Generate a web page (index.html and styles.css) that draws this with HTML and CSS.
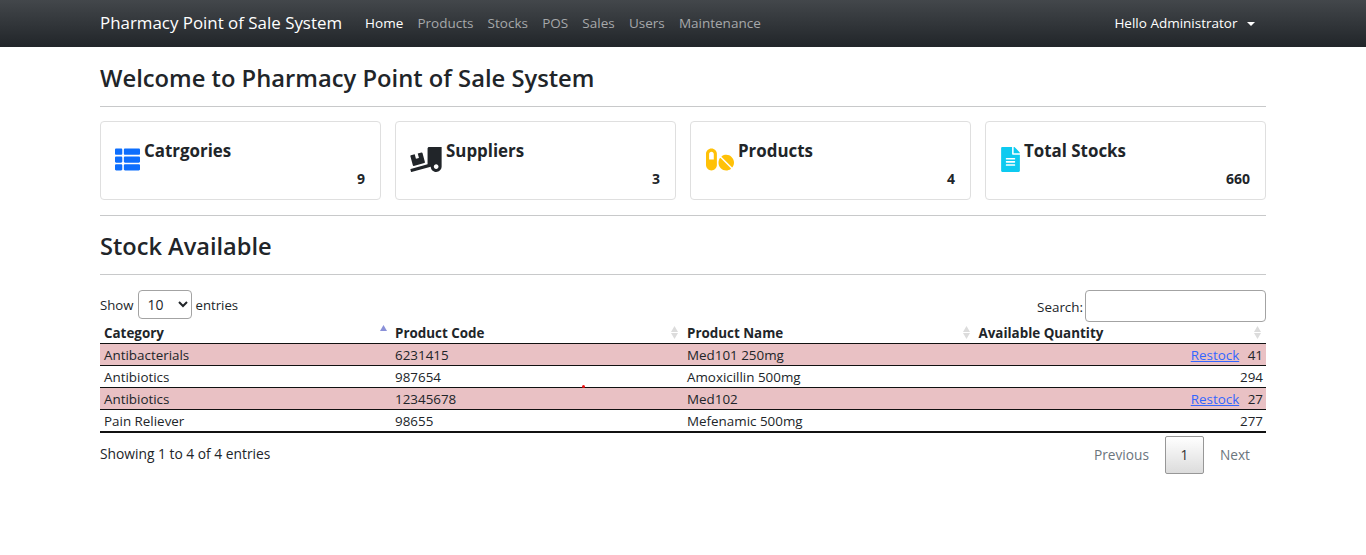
FILE: index.html
```html
<!DOCTYPE html>
<html lang="en">
<head>
    <meta charset="UTF-8">
    <title>Pharmacy Point of Sale System</title>
    <link rel="stylesheet" href="styles.css">
</head>
<body>

    <nav class="navbar">
        <div class="nav-left">
            <span class="brand">Pharmacy Point of Sale System</span>
            <a class="nav-link active" href="#">Home</a>
            <a class="nav-link" href="#">Products</a>
            <a class="nav-link" href="#">Stocks</a>
            <a class="nav-link" href="#">POS</a>
            <a class="nav-link" href="#">Sales</a>
            <a class="nav-link" href="#">Users</a>
            <a class="nav-link" href="#">Maintenance</a>
        </div>
        <a class="user-menu" href="#">Hello Administrator <span class="caret"></span></a>
    </nav>

    <main class="container">
        <h1 class="page-title">Welcome to Pharmacy Point of Sale System</h1>
        <hr>

        <div class="cards">
            <div class="card">
                <div class="card-head">
                    <svg class="icon icon-blue" viewBox="0 0 512 512"><path d="M149.333 216v80c0 13.255-10.745 24-24 24H24c-13.255 0-24-10.745-24-24v-80c0-13.255 10.745-24 24-24h101.333c13.255 0 24 10.745 24 24zM0 376v80c0 13.255 10.745 24 24 24h101.333c13.255 0 24-10.745 24-24v-80c0-13.255-10.745-24-24-24H24c-13.255 0-24 10.745-24 24zM125.333 32H24C10.745 32 0 42.745 0 56v80c0 13.255 10.745 24 24 24h101.333c13.255 0 24-10.745 24-24V56c0-13.255-10.745-24-24-24zm80 448H488c13.255 0 24-10.745 24-24v-80c0-13.255-10.745-24-24-24H205.333c-13.255 0-24 10.745-24 24v80c0 13.255 10.745 24 24 24zm-24-424v80c0 13.255 10.745 24 24 24H488c13.255 0 24-10.745 24-24V56c0-13.255-10.745-24-24-24H205.333c-13.255 0-24 10.745-24 24zm24 264H488c13.255 0 24-10.745 24-24v-80c0-13.255-10.745-24-24-24H205.333c-13.255 0-24 10.745-24 24v80c0 13.255 10.745 24 24 24z"/></svg>
                    <h3 class="card-title">Catrgories</h3>
                </div>
                <div class="card-count">9</div>
            </div>
            <div class="card">
                <div class="card-head">
                    <svg class="icon icon-dark" viewBox="0 0 640 512"><path d="M50.2 375.6c2.3 8.5 11.1 13.6 19.6 11.3l216.4-58c8.5-2.3 13.6-11.1 11.3-19.6l-49.7-185.5c-2.3-8.5-11.1-13.6-19.6-11.3L151 133.3l24.8 92.7-61.8 16.5-24.8-92.7-77.3 20.7C3.4 172.8-1.7 181.6.6 190.1l49.6 185.5zM384 0c-17.7 0-32 14.3-32 32v323.6L5.9 450c-4.3 1.2-6.8 5.6-5.6 9.8l12.6 46.3c1.2 4.3 5.6 6.8 9.8 5.6l393.7-107.4C418.8 464.1 467.6 512 528 512c61.9 0 112-50.1 112-112V0H384zm144 448c-26.5 0-48-21.5-48-48s21.5-48 48-48 48 21.5 48 48-21.5 48-48 48z"/></svg>
                    <h3 class="card-title">Suppliers</h3>
                </div>
                <div class="card-count">3</div>
            </div>
            <div class="card">
                <div class="card-head">
                    <svg class="icon icon-yellow" viewBox="0 0 576 512"><path d="M112 32C50.1 32 0 82.1 0 144v224c0 61.9 50.1 112 112 112s112-50.1 112-112V144c0-61.9-50.1-112-112-112zm48 224H64V144c0-26.5 21.5-48 48-48s48 21.5 48 48v112zm139.7-29.7c-3.5-3.5-9.4-3.1-12.3.8-45.3 62.5-40.4 150.1 15.9 206.4 56.3 56.3 143.9 61.2 206.4 15.9 4-2.9 4.3-8.8.8-12.3L299.7 226.3zm229.8-19c-56.3-56.3-143.9-61.2-206.4-15.9-4 2.9-4.3 8.8-.8 12.3l210.8 210.8c3.5 3.5 9.4 3.1 12.3-.8 45.3-62.6 40.5-150.1-15.9-206.4z"/></svg>
                    <h3 class="card-title">Products</h3>
                </div>
                <div class="card-count">4</div>
            </div>
            <div class="card">
                <div class="card-head">
                    <svg class="icon icon-cyan" viewBox="0 0 384 512"><path d="M224 136V0H24C10.7 0 0 10.7 0 24v464c0 13.3 10.7 24 24 24h336c13.3 0 24-10.7 24-24V160H248c-13.2 0-24-10.8-24-24zm64 236c0 6.6-5.4 12-12 12H108c-6.6 0-12-5.4-12-12v-8c0-6.6 5.4-12 12-12h168c6.6 0 12 5.4 12 12v8zm0-64c0 6.6-5.4 12-12 12H108c-6.6 0-12-5.4-12-12v-8c0-6.6 5.4-12 12-12h168c6.6 0 12 5.4 12 12v8zm0-72v8c0 6.6-5.4 12-12 12H108c-6.6 0-12-5.4-12-12v-8c0-6.6 5.4-12 12-12h168c6.6 0 12 5.4 12 12zm96-114.1v6.1H256V0h6.1c6.4 0 12.5 2.5 17 7l97.9 98c4.5 4.5 7 10.6 7 16.9z"/></svg>
                    <h3 class="card-title">Total Stocks</h3>
                </div>
                <div class="card-count">660</div>
            </div>
        </div>
        <hr>

        <h2 class="section-title">Stock Available</h2>
        <hr>

        <div class="table-top">
            <label class="length">Show
                <select class="length-select"><option>10</option><option>25</option><option>50</option><option>100</option></select>
                entries</label>
            <label class="search">Search:<input class="search-input" type="search"></label>
        </div>

        <div class="table-wrap">
            <table class="stock-table">
                <thead>
                    <tr>
                        <th>Category
                            <svg class="sort sort-active" viewBox="0 0 7 6"><path class="sort-on" d="M3.5 0L7 6H0z"/></svg>
                        </th>
                        <th>Product Code
                            <svg class="sort" viewBox="0 0 7 13"><path class="sort-off" d="M3.5 0L7 6H0z"/><path class="sort-off" d="M3.5 13L7 7H0z"/></svg>
                        </th>
                        <th>Product Name
                            <svg class="sort" viewBox="0 0 7 13"><path class="sort-off" d="M3.5 0L7 6H0z"/><path class="sort-off" d="M3.5 13L7 7H0z"/></svg>
                        </th>
                        <th>Available Quantity
                            <svg class="sort" viewBox="0 0 7 13"><path class="sort-off" d="M3.5 0L7 6H0z"/><path class="sort-off" d="M3.5 13L7 7H0z"/></svg>
                        </th>
                    </tr>
                </thead>
                <tbody>
                    <tr class="low">
                        <td>Antibacterials</td>
                        <td>6231415</td>
                        <td>Med101 250mg</td>
                        <td class="qty"><a href="#">Restock</a> <span class="qty-num">41</span></td>
                    </tr>
                    <tr>
                        <td>Antibiotics</td>
                        <td>987654</td>
                        <td>Amoxicillin 500mg</td>
                        <td class="qty">294</td>
                    </tr>
                    <tr class="low">
                        <td>Antibiotics</td>
                        <td>12345678</td>
                        <td>Med102</td>
                        <td class="qty"><a href="#">Restock</a> <span class="qty-num">27</span></td>
                    </tr>
                    <tr>
                        <td>Pain Reliever</td>
                        <td>98655</td>
                        <td>Mefenamic 500mg</td>
                        <td class="qty">277</td>
                    </tr>
                </tbody>
            </table>
            <span class="red-dot"></span>
        </div>

        <div class="table-bottom">
            <div class="info">Showing 1 to 4 of 4 entries</div>
            <div class="pager">
                <a class="page-btn" href="#">Previous</a>
                <a class="page-btn current" href="#">1</a>
                <a class="page-btn" href="#">Next</a>
            </div>
        </div>
    </main>

</body>
</html>
```

FILE: styles.css
```css
* {
    box-sizing: border-box;
}
body {
    margin: 0;
    font-family: 'Open Sans', 'Noto Sans', sans-serif;
    font-size: 13.4px;
    color: #212529;
    background: #fff;
}
a {
    text-decoration: none;
}
.navbar {
    display: flex;
    justify-content: space-between;
    align-items: center;
    height: 47px;
    padding: 0 100px 2px;
    background: linear-gradient(#43474b, #212529);
}
.nav-left {
    display: flex;
    align-items: center;
}
.brand {
    color: #fff;
    font-size: 16.9px;
    margin-right: 23px;
}
.nav-link {
    color: #a6a8aa;
    font-size: 13.5px;
    margin-right: 14.2px;
}
.nav-link.active {
    color: #fff;
    font-weight: 500;
}
.user-menu {
    color: #fff;
    font-size: 13.5px;
    margin-right: 11px;
}
.caret {
    display: inline-block;
    margin-left: 6px;
    vertical-align: 2px;
    border-top: 4px solid #fff;
    border-left: 4px solid transparent;
    border-right: 4px solid transparent;
}
.container {
    width: 1166px;
    margin: 0 auto;
}
hr {
    margin: 0;
    border: none;
    border-top: 1px solid #c8c9ca;
}
.page-title {
    margin: 0;
    height: 59px;
    padding-top: 14px;
    font-size: 23.75px;
    line-height: 34px;
    font-weight: 600;
}
.section-title {
    margin: 0;
    height: 58px;
    padding-top: 13px;
    font-size: 23.6px;
    line-height: 34px;
    font-weight: 600;
}
.cards {
    display: grid;
    grid-template-columns: repeat(4, 1fr);
    gap: 14px;
    margin: 14px 0 15px;
}
.card {
    height: 79px;
    padding: 17px 15px 0;
    border: 1px solid #dfdfdf;
    border-radius: 4px;
}
.card-head {
    display: flex;
    align-items: flex-start;
}
.card-title {
    margin: 0;
    font-size: 16.9px;
    line-height: 24px;
    font-weight: 680;
    color: #212529;
}
.icon {
    height: 25px;
    margin-top: 8px;
    margin-right: 4px;
    flex: none;
}
.icon-blue {
    width: 25px;
    margin-left: -1px;
    fill: #0d6efd;
}
.icon-dark {
    width: 32px;
    margin-left: -1px;
    fill: #212529;
}
.icon-yellow {
    width: 28px;
    fill: #ffc107;
}
.icon-cyan {
    width: 19px;
    fill: #0dcaf0;
}
.card-count {
    text-align: right;
    font-weight: 700;
    font-size: 14px;
    line-height: 18px;
    margin-top: -2px;
}
.table-top {
    display: flex;
    justify-content: space-between;
    height: 47px;
    padding-top: 15px;
}
.length {
    display: flex;
    align-items: center;
    gap: 4px;
    height: 29px;
    font-size: 13.2px;
}
.length-select {
    width: 54px;
    height: 29px;
    margin: 0 -1px 0 1px;
    padding: 0 4px;
    font: inherit;
    font-size: 14px;
    color: #212529;
    background: #fff;
    border: 1px solid #a3a3a3;
    border-radius: 4px;
}
.search {
    display: flex;
    align-items: center;
    gap: 2px;
    height: 32px;
    padding-top: 2px;
}
.search-input {
    width: 181px;
    height: 32px;
    margin-top: -2px;
    border: 1px solid #a3a3a3;
    border-radius: 4px;
}
.table-wrap {
    position: relative;
}
.stock-table {
    width: 100%;
    table-layout: fixed;
    border-collapse: collapse;
}
.stock-table th {
    position: relative;
    height: 21px;
    padding: 2px 3px 0 4px;
    text-align: left;
    font-weight: 700;
    border-bottom: 1px solid #111;
}
.stock-table td {
    height: 22px;
    padding: 2px 3px 0 4px;
    border-bottom: 1px solid #111;
}
.stock-table th:nth-child(2),
.stock-table td:nth-child(2) {
    padding-left: 3.5px;
}
.stock-table tbody tr:last-child td {
    height: 23px;
    border-bottom: 2px solid #111;
}
.low td {
    background: #e9c1c4;
}
.qty {
    text-align: right;
}
.qty a {
    color: #3366ff;
    text-decoration: underline;
}
.qty-num {
    margin-left: 5px;
}
.sort {
    position: absolute;
    top: 4px;
    right: 5px;
    width: 7px;
    height: 13px;
}
.sort-active {
    top: 3px;
    height: 6px;
}
.sort-on {
    fill: #8a90d8;
}
.sort-off {
    fill: #dcdcdc;
}
.red-dot {
    position: absolute;
    left: 482px;
    top: 63px;
    width: 3px;
    height: 3px;
    border-radius: 50%;
    background: #f01010;
}
.table-bottom {
    display: flex;
    justify-content: space-between;
    padding-top: 3px;
}
.info {
    padding-top: 8px;
    font-size: 13.8px;
}
.pager {
    display: flex;
    align-items: center;
    font-size: 13.7px;
}
.page-btn {
    padding: 0 16px;
    line-height: 36px;
    color: #6c757d;
}
.page-btn.current {
    width: 39px;
    padding: 0;
    text-align: center;
    color: #333;
    border: 1px solid #979797;
    border-radius: 2px;
    background: linear-gradient(#fff, #dcdcdc);
}
```
